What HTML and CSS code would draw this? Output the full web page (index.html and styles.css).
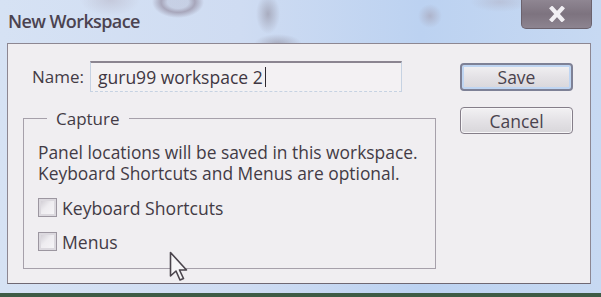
FILE: index.html
```html
<!DOCTYPE html>
<html>
<head>
<meta charset="utf-8">
<link rel="stylesheet" href="styles.css">
</head>
<body>
<div class="window">
  <div class="titlebar">
    <div class="title">New Workspace</div>
    <div class="close">
      <svg width="26" height="16" viewBox="0 0 26 16"><path d="M8 2.5 L18 13.5 M18 2.5 L8 13.5" stroke="#f1eff3" stroke-width="4.2" stroke-linecap="square"/></svg>
    </div>
  </div>
  <div class="client">
    <div class="main">
      <div class="name-row">
        <span class="label">Name:</span>
        <div class="input"><span class="value">guru99 workspace 2</span><span class="caret"></span></div>
      </div>
      <fieldset class="group">
        <legend class="legend">Capture</legend>
        <div class="group-body">
          <div class="desc">
            <div class="desc-line">Panel locations will be saved in this workspace.</div>
            <div class="desc-line">Keyboard Shortcuts and Menus are optional.</div>
          </div>
          <label class="check"><span class="box"></span>Keyboard Shortcuts</label>
          <label class="check"><span class="box"></span>Menus</label>
        </div>
      </fieldset>
    </div>
    <div class="buttons">
      <div class="btn btn-default">Save</div>
      <div class="btn">Cancel</div>
    </div>
    <svg class="pointer" width="22" height="32" viewBox="0 0 22 32">
      <path d="M1.5 1.5 L1.5 25 L7 20 L11 29 L14.5 27.5 L10.5 19 L17.5 19 Z" fill="#f6f5f7" stroke="#4a444c" stroke-width="1.6" stroke-linejoin="round"/>
    </svg>
  </div>
  <div class="frame-bottom"></div>
  <div class="taskbar-line"></div>
</div>
</body>
</html>
```

FILE: styles.css
```css
* { box-sizing: border-box; }
html, body { margin: 0; padding: 0; }
body {
  width: 601px;
  height: 297px;
  overflow: hidden;
  font-family: "Open Sans", "Noto Sans", sans-serif;
  color: #433b45;
}
.window {
  width: 601px;
  height: 297px;
  display: flex;
  flex-direction: column;
  background:
    radial-gradient(ellipse 26px 16px at 178px 2px, rgba(140,130,150,0.15) 40%, rgba(140,130,150,0.6) 65%, rgba(140,130,150,0) 100%),
    radial-gradient(ellipse 12px 20px at 268px 14px, rgba(140,135,150,0.55), rgba(140,135,150,0) 100%),
    radial-gradient(ellipse 24px 10px at 278px 44px, rgba(140,135,150,0.55), rgba(140,135,150,0) 100%),
    radial-gradient(ellipse 12px 12px at 430px 16px, rgba(160,150,165,0.5), rgba(160,150,165,0) 100%),
    radial-gradient(ellipse 30px 16px at 110px 0px, rgba(170,160,175,0.35), rgba(170,160,175,0) 100%),
    radial-gradient(ellipse 30px 10px at 500px 2px, rgba(170,160,175,0.35), rgba(170,160,175,0) 100%),
    linear-gradient(90deg, #d6e2f4 0%, #cfdcf2 40%, #bcd2f1 70%, #c7d9f2 100%);
}
.titlebar {
  height: 43px;
  display: flex;
  justify-content: space-between;
  align-items: flex-start;
  padding: 0 9px 0 8px;
}
.title {
  margin-top: 9px;
  font-size: 18px;
  font-weight: 600;
  color: #4b4350;
  letter-spacing: -0.6px;
}
.close {
  width: 71px;
  height: 29px;
  display: flex;
  align-items: center;
  justify-content: center;
  border: 1px solid #6b626d;
  border-top: none;
  border-radius: 0 0 5px 5px;
  background: linear-gradient(180deg, #8f8692 0%, #7d737f 50%, #8d8490 100%);
}
.client {
  position: relative;
  height: 241px;
  margin: 0 10px 0 7px;
  background: #f0eef1;
  border: 1px solid #8d8792;
  border-bottom-color: #6f6873;
  display: flex;
  padding: 17px 17px 0 15px;
}
.main {
  width: 413px;
  display: flex;
  flex-direction: column;
}
.name-row {
  display: flex;
  align-items: center;
  height: 31px;
}
.label {
  font-size: 17px;
  margin-left: 9px;
  width: 58px;
}
.input {
  width: 312px;
  height: 31px;
  border: 1px solid #c6d2e2;
  border-top: 2px solid #8b8590;
  border-bottom-style: dashed;
  background: #f3f1f3;
  display: flex;
  align-items: center;
  padding-left: 7px;
  font-size: 17.5px;
}
.value { color: #3f3742; }
.caret {
  display: inline-block;
  width: 1px;
  height: 20px;
  background: #2e2a30;
  margin-left: 2px;
}
.group {
  margin: 16px 0 0 0;
  padding: 0;
  height: 161px;
  border: 1px solid #a6a0aa;
}
.legend {
  margin-left: 23px;
  padding: 0 9px;
  font-size: 17px;
  line-height: 21px;
}
.group-body {
  padding: 13px 0 0 14px;
}
.desc {
  margin: 0 0 14px 0;
  font-size: 17.4px;
}
.desc-line {
  height: 21px;
  line-height: 21px;
}
.check {
  display: flex;
  align-items: center;
  height: 19px;
  margin-bottom: 15px;
  font-size: 17.6px;
}
.box {
  width: 19px;
  height: 19px;
  border: 1px solid #9c96a0;
  background: linear-gradient(135deg, #c9c5cd 0%, #eeecf0 45%, #f8f7f9 100%);
  box-shadow: inset 0 0 0 2px #dcd9df;
  margin-right: 5px;
}
.buttons {
  margin-left: 24px;
  padding-top: 2px;
  display: flex;
  flex-direction: column;
  gap: 16px;
}
.btn {
  width: 113px;
  height: 27px;
  border: 1px solid #857e89;
  border-radius: 4px;
  background: linear-gradient(180deg, #f2f1f3 0%, #e4e2e6 50%, #d8d6da 100%);
  box-shadow: inset 0 0 0 1px #f7f6f8;
  display: flex;
  align-items: center;
  justify-content: center;
  font-size: 17.5px;
  color: #4a424d;
}
.btn-default {
  height: 28px;
  border: 2px solid #7e8196;
  box-shadow: inset 0 0 0 2px #bfd5f2;
}
.pointer {
  position: absolute;
  left: 161px;
  top: 207px;
}
.frame-bottom {
  flex: 1;
}
.taskbar-line {
  height: 4px;
  background: #3e5b45;
}
```
